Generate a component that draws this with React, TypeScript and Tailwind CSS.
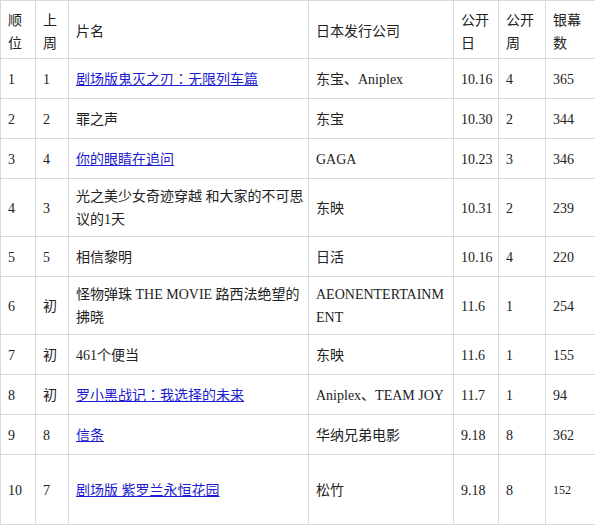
import React from "react";

type Cell = { text: React.ReactNode; link?: boolean; small?: boolean };
type Row = { h: string; cells: Cell[] };

const colW = ["w-[35px]", "w-[33px]", "w-[240px]", "w-[145px]", "w-[45px]", "w-[47px]", "w-[49px]"];

const Colon = () => (
  <span style={{ fontFamily: '"Noto Sans CJK JP", "Noto Sans CJK TC", sans-serif' }}>：</span>
);

const rows: Row[] = [
  { h: "h-[40px]", cells: [{ text: "1" }, { text: "1" }, { text: <>剧场版鬼灭之刃<Colon />无限列车篇</>, link: true }, { text: "东宝、Aniplex" }, { text: "10.16" }, { text: "4" }, { text: "365" }] },
  { h: "h-[40px]", cells: [{ text: "2" }, { text: "2" }, { text: "罪之声" }, { text: "东宝" }, { text: "10.30" }, { text: "2" }, { text: "344" }] },
  { h: "h-[40px]", cells: [{ text: "3" }, { text: "4" }, { text: "你的眼睛在追问", link: true }, { text: "GAGA" }, { text: "10.23" }, { text: "3" }, { text: "346" }] },
  { h: "h-[58px]", cells: [{ text: "4" }, { text: "3" }, { text: <>光之美少女奇迹穿越 和大家的不可思<br />议的1天</> }, { text: "东映" }, { text: "10.31" }, { text: "2" }, { text: "239" }] },
  { h: "h-[40px]", cells: [{ text: "5" }, { text: "5" }, { text: "相信黎明" }, { text: "日活" }, { text: "10.16" }, { text: "4" }, { text: "220" }] },
  { h: "h-[58px]", cells: [{ text: "6" }, { text: "初" }, { text: <>怪物弹珠 THE MOVIE 路西法绝望的<br />拂晓</> }, { text: <>AEONENTERTAINM<br />ENT</> }, { text: "11.6" }, { text: "1" }, { text: "254" }] },
  { h: "h-[40px]", cells: [{ text: "7" }, { text: "初" }, { text: "461个便当" }, { text: "东映" }, { text: "11.6" }, { text: "1" }, { text: "155" }] },
  { h: "h-[40px]", cells: [{ text: "8" }, { text: "初" }, { text: <>罗小黑战记<Colon />我选择的未来</>, link: true }, { text: "Aniplex、TEAM JOY" }, { text: "11.7" }, { text: "1" }, { text: "94" }] },
  { h: "h-[40px]", cells: [{ text: "9" }, { text: "8" }, { text: "信条", link: true }, { text: "华纳兄弟电影" }, { text: "9.18" }, { text: "8" }, { text: "362" }] },
  { h: "h-[70px]", cells: [{ text: "10" }, { text: "7" }, { text: "剧场版 紫罗兰永恒花园", link: true }, { text: "松竹" }, { text: "9.18" }, { text: "8" }, { text: "152", small: true }] },
];

const header: React.ReactNode[] = [
  <>顺<br />位</>,
  <>上<br />周</>,
  "片名",
  "日本发行公司",
  <>公开<br />日</>,
  <>公开<br />周</>,
  <>银幕<br />数</>,
];

export default function App() {
  return (
    <div
      className="w-[595px] h-[526px] bg-white text-[#222] text-[14px] leading-[23px]"
      style={{ fontFamily: '"Liberation Serif", "Noto Sans CJK SC", serif' }}
    >
      <div className="border-l border-t border-[#d9d9d9] w-[595px]">
        <div className="flex h-[58px] border-b border-[#d9d9d9]">
          {header.map((c, i) => (
            <div
              key={i}
              className={`${colW[i]} shrink-0 flex items-center pl-[7px] pt-[4px] whitespace-nowrap ${i < 6 ? "border-r border-[#d9d9d9]" : ""}`}
            >
              <div>{c}</div>
            </div>
          ))}
        </div>
        {rows.map((r, ri) => (
          <div key={ri} className={`flex ${r.h} border-b border-[#d9d9d9]`}>
            {r.cells.map((c, i) => (
              <div
                key={i}
                className={`${colW[i]} shrink-0 flex items-center pl-[7px] pt-[1px] whitespace-nowrap ${i < 6 ? "border-r border-[#d9d9d9]" : ""}`}
              >
                {c.link ? (
                  <a href="#" className="text-[#1c1cd0] underline">
                    {c.text}
                  </a>
                ) : (
                  <div className={c.small ? "text-[12px]" : ""}>{c.text}</div>
                )}
              </div>
            ))}
          </div>
        ))}
      </div>
    </div>
  );
}
